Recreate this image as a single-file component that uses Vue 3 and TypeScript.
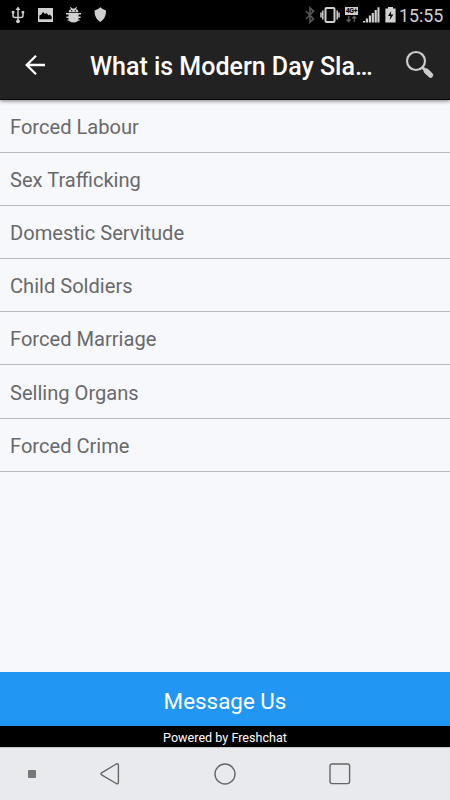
<script setup lang="ts">
const topics: string[] = [
  'Forced Labour',
  'Sex Trafficking',
  'Domestic Servitude',
  'Child Soldiers',
  'Forced Marriage',
  'Selling Organs',
  'Forced Crime',
]
</script>

<template>
  <div class="screen">
    <div class="status">
      <div class="notifications">
        <svg width="14" height="18" viewBox="0 0 14 18" fill="none" stroke="#cfcfcf" stroke-width="1.5">
          <path d="M7 3v13M2 6v3.5q0 2 2 2h6q2 0 2-2V6" />
          <path d="M7 .5 9.5 4h-5zM.8 5h2.6v2.6H.8zM10.6 5h2.6v2.6h-2.6z" fill="#cfcfcf" stroke="none" />
          <circle cx="7" cy="15.3" r="1.9" fill="#cfcfcf" stroke="none" />
        </svg>
        <svg width="15" height="18" viewBox="0 0 15 18" fill="#cfcfcf" fill-rule="evenodd">
          <path d="M0 2h15v14H0zM1.4 13.2h12.2v-2.6l-2-2.2-1 1L8.5 7 7 8 5 6 3.3 8.4 1.4 9.5z" />
        </svg>
        <svg width="15" height="18" viewBox="0 0 15 18" fill="#cfcfcf">
          <path d="M2.5 6.3Q2.5 3.7 5 3L4 1.5l.8-.6L6.3 2.6h2.4L10.2.9l.8.6L10 3q2.5.7 2.5 3.3zM2.5 7h10v5q0 4.6-5 4.6t-5-4.6z" />
          <path d="M0 7h15v1.4H0zM.4 10.5h14.2v1.4H.4zM1.5 13.4h12v1.3h-12z" />
          <circle cx="5.7" cy="4.8" r=".7" fill="#000" /><circle cx="9.3" cy="4.8" r=".7" fill="#000" />
        </svg>
        <svg width="12" height="18" viewBox="0 0 12 18" fill="#cfcfcf">
          <path d="M6.3 1.2Q8.8 3.8 12 4.4 12.5 12 6.3 16 .1 12 .6 4.4 3.8 3.8 6.3 1.2z" />
        </svg>
      </div>
      <div class="system">
        <svg class="bluetooth" width="10" height="18" viewBox="0 0 10 18" fill="none" stroke="#555" stroke-width="1.7">
          <path d="m1 5 7.5 8L5 16.2V1.8L8.5 5 1 13" />
        </svg>
        <svg class="vibrate" width="20" height="18" viewBox="0 0 20 18" fill="none" stroke="#cfcfcf">
          <rect x="5.5" y="2" width="9" height="14" rx="1" stroke-width="2" />
          <path d="M2.8 4.5v9M17.2 4.5v9M1 6.5v5M19 6.5v5" stroke-width="1.5" />
        </svg>
        <div class="network">
          <span>4G+</span>
          <svg width="13" height="8" viewBox="0 0 13 8" fill="none" stroke="#656565" stroke-width="1.3">
            <path d="M3.7 1v5.5M1.7 4.5l2 2 2-2M9.3 7V1.5M7.3 3.5l2-2 2 2" />
          </svg>
        </div>
        <svg class="signal" width="17" height="18" viewBox="0 0 17 18" fill="#cfcfcf">
          <path d="M0 15h2.2v1.5H0zM2.8 12.5H5v4H2.8zM5.8 9.5H8v7H5.8zM8.7 7h2.2v9.5H8.7zM11.6 4h2.2v12.5h-2.2zM14.4 1.2h2.1v15.3h-2.1z" />
        </svg>
        <svg class="battery" width="11" height="18" viewBox="0 0 11 18">
          <path d="M3 1h5v1.6h2.6v14H.4v-14H3z" fill="#d2d2d2" />
          <path d="M6.2 5 3 10h2.4l-.7 4 3.7-5.6H5.9z" fill="#000" />
        </svg>
        <time>15:55</time>
      </div>
    </div>

    <header class="toolbar">
      <svg class="back" width="22" height="22" viewBox="0 0 22 22" fill="none" stroke="#fff" stroke-width="2.3">
        <path d="M20 11H2M11 1.7 1.7 11l9.3 9.3" />
      </svg>
      <h1>What is Modern Day Sla…</h1>
      <svg class="search" width="30" height="30" viewBox="0 0 30 30" fill="none" stroke="#ccc">
        <circle cx="11" cy="11" r="9" stroke-width="2.2" />
        <path d="m17 17 3 3" stroke-width="2.8" />
        <path d="m21.2 21 4.4 4.2" stroke-width="5.2" stroke-linecap="round" />
      </svg>
    </header>

    <ul class="topics">
      <li v-for="topic in topics" :key="topic"><span>{{ topic }}</span></li>
    </ul>

    <button class="message" type="button"><span>Message Us</span></button>
    <div class="powered"><span>Powered by Freshchat</span></div>

    <nav class="navigation">
      <i class="dot"></i>
      <svg class="nav-back" width="20" height="24" viewBox="0 0 20 24" fill="none" stroke="#666" stroke-width="1.4">
        <path d="M1.6 10.8 16.2 2q2.2-1 2.2 1.2v17.1q0 2.2-2.2 1.2L1.6 12.8q-1.5-1 0-2z" />
      </svg>
      <svg class="home" width="22" height="22" viewBox="0 0 22 22" fill="none" stroke="#666" stroke-width="1.4">
        <circle cx="11" cy="11" r="10" />
      </svg>
      <svg class="recent" width="22" height="22" viewBox="0 0 22 22" fill="none" stroke="#666" stroke-width="1.4">
        <rect x="1" y="1" width="19.6" height="19.6" rx="2" />
      </svg>
    </nav>
  </div>
</template>

<style>
body {
  margin: 0;
}
</style>

<style scoped>
.screen {
  display: flex;
  flex-direction: column;
  width: 450px;
  height: 800px;
  overflow: hidden;
  background: #f7f8fb;
  font-family: Roboto, sans-serif;
}
svg {
  display: block;
  flex: none;
}
.status {
  display: flex;
  justify-content: space-between;
  height: 30px;
  flex: none;
  background: #000;
}
.notifications,
.system {
  display: flex;
  align-items: center;
}
.notifications {
  gap: 13px;
  padding-left: 11px;
}
.system {
  padding-right: 7px;
}
.bluetooth {
  margin-right: 5px;
}
.vibrate {
  margin-right: 5px;
}
.network {
  width: 13px;
  margin-right: 5px;
}
.network span {
  display: block;
  height: 8px;
  background: #cfcfcf;
  color: #000;
  font-size: 7px;
  font-weight: 700;
  line-height: 8px;
  letter-spacing: -0.3px;
  text-align: center;
}
.signal {
  margin-right: 5px;
}
.battery {
  margin-right: 3px;
}
time {
  width: 44px;
  padding-top: 1px;
  color: #d2d2d2;
  font-size: 17.8px;
  line-height: 30px;
  white-space: nowrap;
}
.toolbar {
  display: flex;
  align-items: center;
  box-sizing: border-box;
  height: 70px;
  flex: none;
  padding-left: 25px;
  background: #222;
  border-bottom: 1px solid #090909;
  box-shadow: 0 1px 4px rgba(0, 0, 0, 0.5);
}
h1 {
  width: 283px;
  margin: 4px 0 0 43px;
  color: #fff;
  font-size: 25px;
  font-weight: 500;
  line-height: 34px;
  white-space: nowrap;
}
.search {
  margin-left: 32px;
}
.topics {
  flex: 1;
  margin: 0;
  padding: 0;
  list-style: none;
}
li {
  display: flex;
  align-items: center;
  box-sizing: border-box;
  height: 53.1px;
  padding: 2px 10px 0;
  border-bottom: 1px solid #b9babc;
  color: #68696b;
  font-size: 20.1px;
}
.message {
  display: flex;
  align-items: center;
  justify-content: center;
  box-sizing: border-box;
  height: 54px;
  flex: none;
  margin: 0;
  padding: 3px 0 0;
  border: 0;
  background: #2196f3;
  color: #fff;
  font: 400 22.4px Roboto, sans-serif;
}
.powered {
  display: flex;
  align-items: center;
  justify-content: center;
  box-sizing: border-box;
  height: 21px;
  padding-top: 2px;
  flex: none;
  background: #000;
  color: #fff;
  font-size: 12.6px;
}
.navigation {
  display: flex;
  align-items: center;
  box-sizing: border-box;
  height: 53px;
  flex: none;
  padding-left: 28px;
  border-top: 1px solid #c9cacc;
  background: #e9eaee;
}
.dot {
  width: 8px;
  height: 8px;
  border-radius: 1px;
  background: #777;
}
.nav-back {
  margin-left: 64px;
}
.home {
  margin-left: 94px;
}
.recent {
  margin-left: 93px;
}
</style>
